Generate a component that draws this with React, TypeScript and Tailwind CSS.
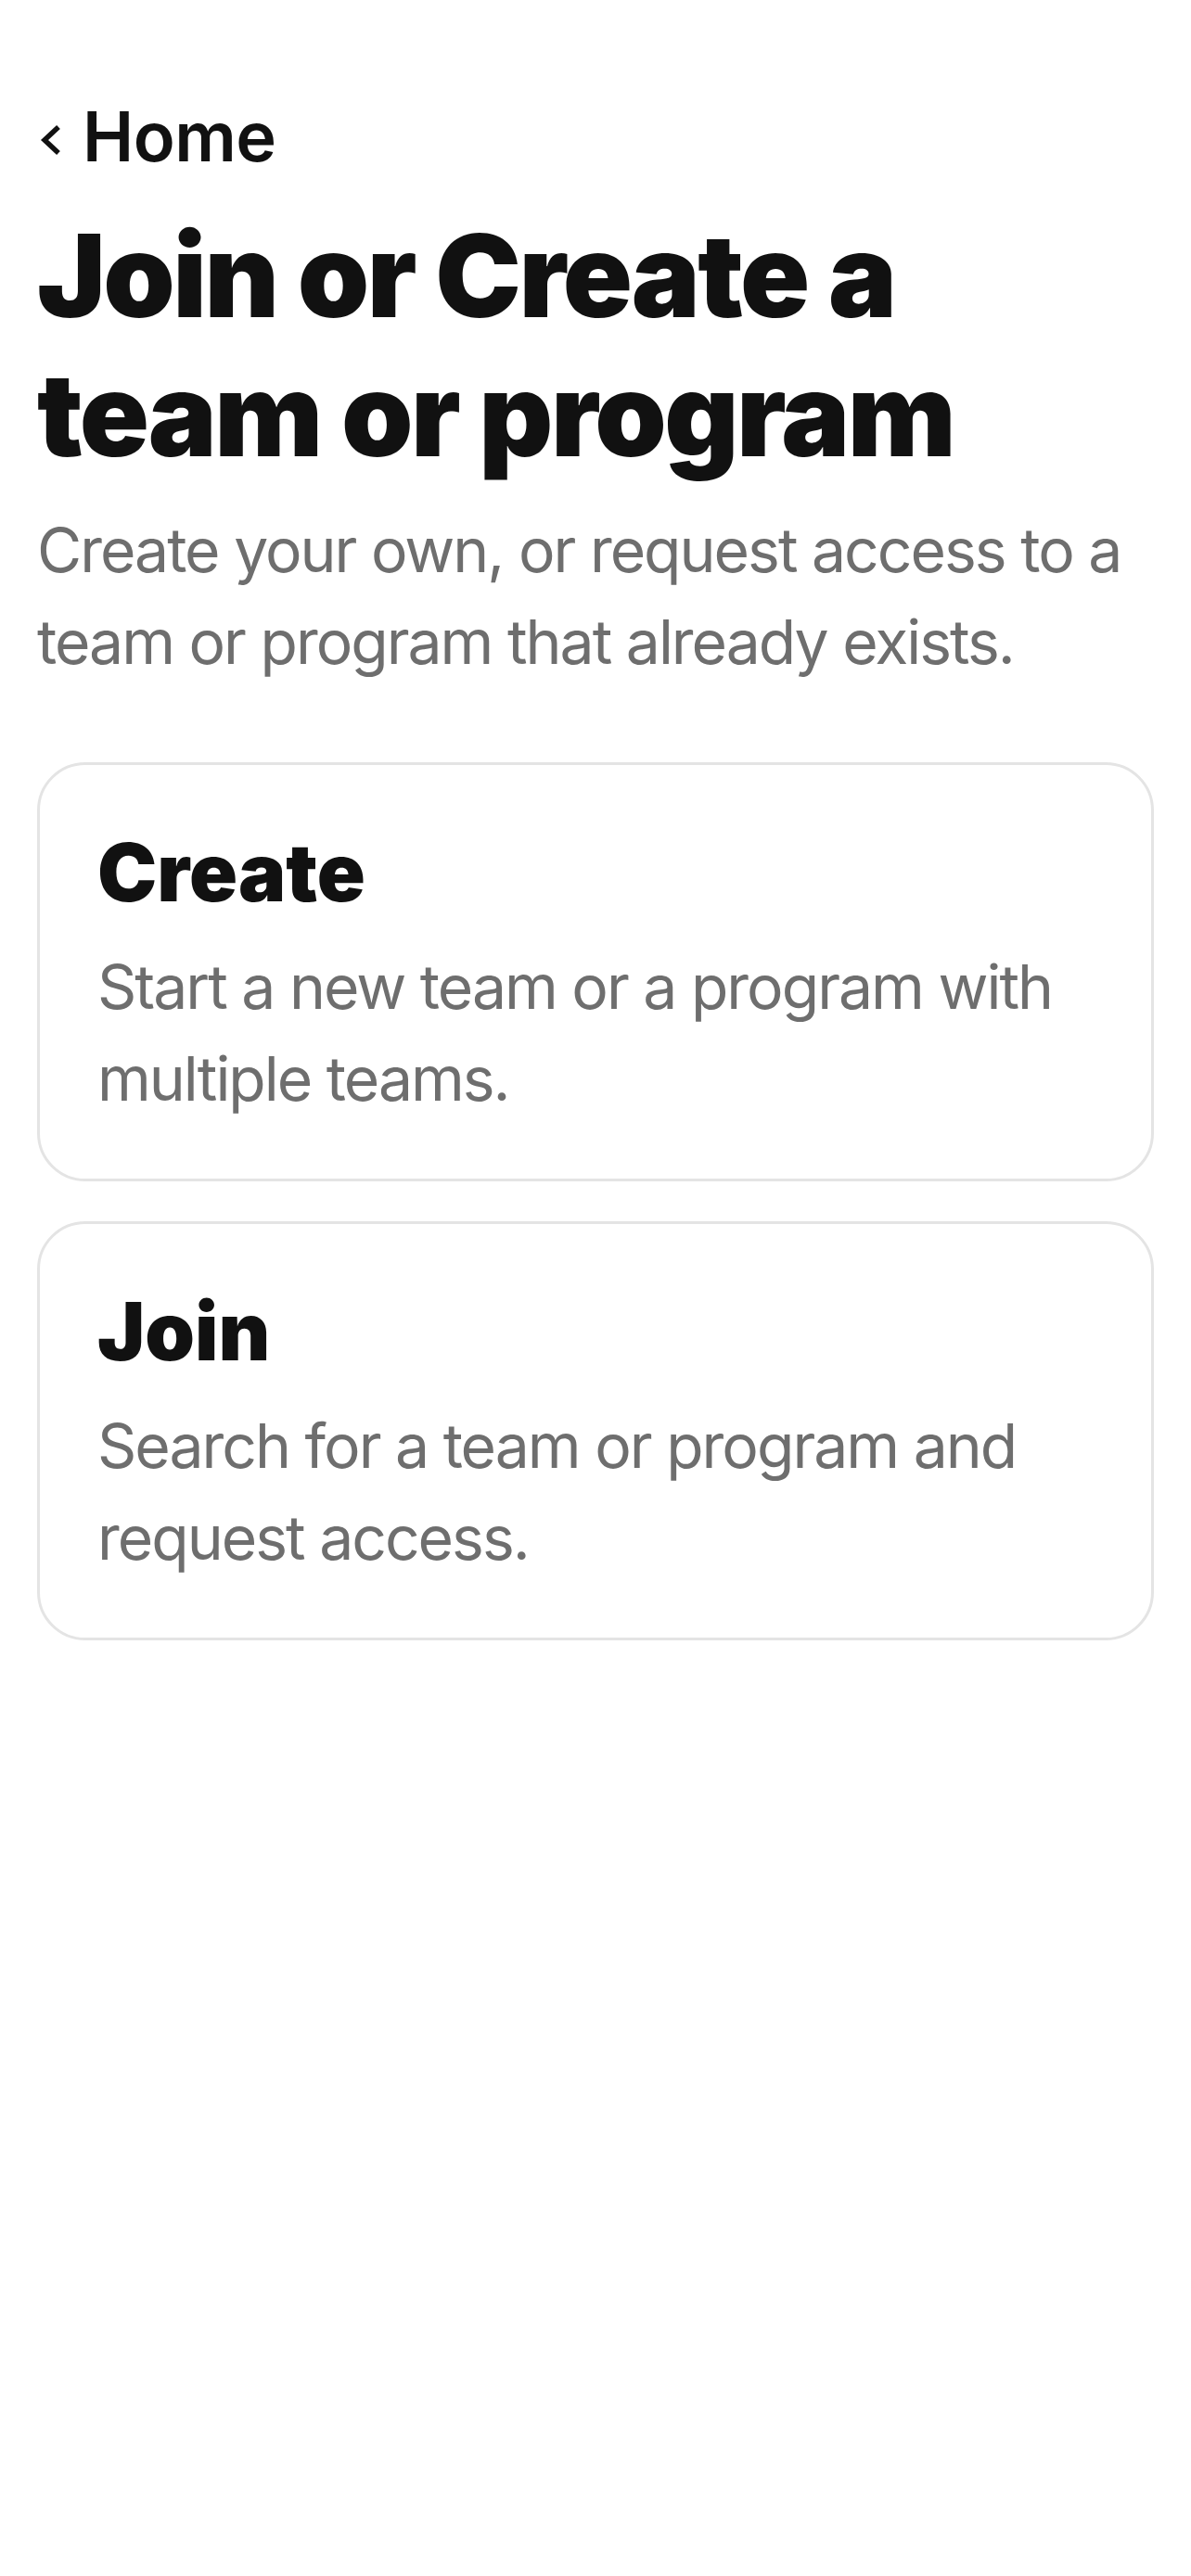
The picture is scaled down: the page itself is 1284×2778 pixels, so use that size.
interface OptionCardProps {
  title: string;
  description: string;
}

function OptionCard({ title, description }: OptionCardProps) {
  return (
    <button
      type="button"
      className="w-full text-left rounded-[52px] border-[3px] border-[#e4e4e4] bg-white pl-[62px] pr-[50px] pt-[68px] pb-[58px] flex flex-col gap-[26px]"
    >
      <span className="text-[86px] leading-[96px] font-black tracking-[0px] text-[#111111]">
        {title}
      </span>
      <span className="text-[66px] leading-[99px] font-normal tracking-[-2px] text-[#6e6e6e]">
        {description}
      </span>
    </button>
  );
}

export default function App() {
  return (
    <div
      className="min-h-[2778px] w-full bg-white px-[40px] pt-[102px]"
      style={{ fontFamily: "Inter, 'Noto Sans', sans-serif" }}
    >
      <a href="#" className="flex items-center gap-[22px] h-[90px] pl-[3px] text-[#111111]">
        <svg width="24" height="34" viewBox="0 0 24 34" className="mt-[8px]">
          <polyline
            points="20,3 5,17 20,31"
            fill="none"
            stroke="#111111"
            strokeWidth="5.5"
            strokeLinecap="butt"
            strokeLinejoin="miter"
          />
        </svg>
        <span className="text-[74px] leading-[90px] font-semibold tracking-[-0.5px]">Home</span>
      </a>

      <h1 className="mt-[30px] text-[124px] leading-[150px] font-black tracking-[-2.5px] text-[#111111]">
        Join or Create a
        <br />
        team or program
      </h1>

      <p className="mt-[22px] text-[66px] leading-[99px] tracking-[-2px] text-[#6e6e6e]">
        Create your own, or request access to a team or program that already exists.
      </p>

      <div className="mt-[80px] flex flex-col gap-[43px]">
        <OptionCard title="Create" description="Start a new team or a program with multiple teams." />
        <OptionCard title="Join" description="Search for a team or program and request access." />
      </div>
    </div>
  );
}
